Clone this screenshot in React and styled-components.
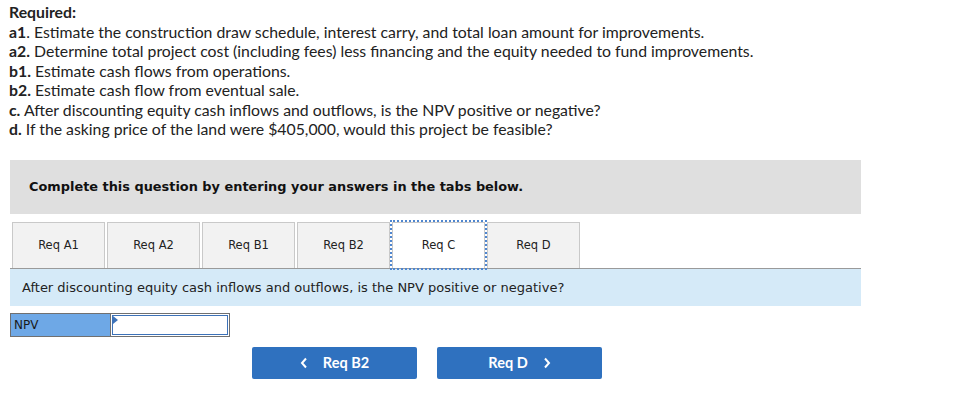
import React from 'react';
import styled, { createGlobalStyle } from 'styled-components';

const GlobalStyle = createGlobalStyle`
  body {
    margin: 0;
    background: #fff;
  }
`;

const Page = styled.div`
  padding: 2px 0 0 9px;
  width: 957px;
  box-sizing: border-box;
`;

const Required = styled.div`
  font-family: Lato, "Open Sans", sans-serif;
  font-size: 15.8px;
  line-height: 19.5px;
  color: #222;
`;

const Line = styled.div`
  b {
    font-weight: 700;
  }
`;

const Panel = styled.div`
  width: 851px;
  margin: 21px 0 0 1px;
  font-family: Verdana, "DejaVu Sans", sans-serif;
`;

const Banner = styled.div`
  background: #dfdfdf;
  height: 54px;
  display: flex;
  align-items: center;
  padding-left: 19px;
  font-size: 12.9px;
  font-weight: bold;
  color: #111;
`;

const TabRow = styled.div`
  display: flex;
  gap: 2px;
  padding: 8px 2px 0;
  border-bottom: 1px solid #9a9a9a;
`;

const Tab = styled.div`
  width: 93px;
  height: 46px;
  box-sizing: border-box;
  border: 1px solid #c9c9c9;
  border-bottom: none;
  background: ${({ active }) => (active ? '#fff' : '#f2f2f2')};
  outline: ${({ active }) => (active ? '2px dotted #4f86cf' : 'none')};
  outline-offset: 0;
  display: flex;
  align-items: center;
  justify-content: center;
  font-size: 11.5px;
  color: #222;
`;

const Question = styled.div`
  background: #d5eaf8;
  height: 37px;
  display: flex;
  align-items: center;
  padding-left: 12px;
  font-size: 13px;
  color: #222;
`;

const AnswerRow = styled.div`
  display: flex;
  margin-top: 7px;
`;

const Label = styled.div`
  width: 100px;
  height: 24px;
  box-sizing: border-box;
  background: #6ea8e6;
  border: 1px solid #707070;
  border-right: none;
  display: flex;
  align-items: center;
  padding-left: 3px;
  font-size: 12px;
  color: #1a1a1a;
`;

const InputCell = styled.div`
  position: relative;
  width: 120px;
  height: 24px;
  box-sizing: border-box;
  border: 1px solid #707070;
  padding: 1px;
  background: #fff;
`;

const Field = styled.input`
  width: 100%;
  height: 100%;
  box-sizing: border-box;
  border: 1px solid #3d72b8;
  outline: none;
  padding: 0 4px;
`;

const Marker = styled.span`
  position: absolute;
  left: 2px;
  top: 2px;
  width: 0;
  height: 0;
  border-top: 4px solid transparent;
  border-bottom: 4px solid transparent;
  border-left: 5px solid #3d72b8;
`;

const NavRow = styled.div`
  display: flex;
  gap: 20px;
  margin: 10px 0 0 242px;
`;

const NavButton = styled.button`
  width: 165px;
  height: 32px;
  border: none;
  border-radius: 2px;
  background: #2f71bf;
  color: #fff;
  font-family: Lato, "Open Sans", sans-serif;
  font-weight: 700;
  font-size: 14.5px;
  display: flex;
  align-items: center;
  justify-content: center;
  gap: 15px;
  cursor: pointer;
`;

const Chevron = ({ dir }) => (
  <svg width="8" height="12" viewBox="0 0 8 12">
    <path
      d={dir === 'left' ? 'M6 1.5L2 6l4 4.5' : 'M2 1.5L6 6l-4 4.5'}
      fill="none"
      stroke="#fff"
      strokeWidth="2"
    />
  </svg>
);

const tabs = ['Req A1', 'Req A2', 'Req B1', 'Req B2', 'Req C', 'Req D'];

export default function App() {
  return (
    <>
      <GlobalStyle />
      <Page>
        <Required>
          <Line><b>Required:</b></Line>
          <Line><b>a1</b>. Estimate the construction draw schedule, interest carry, and total loan amount for improvements.</Line>
          <Line><b>a2.</b> Determine total project cost (including fees) less financing and the equity needed to fund improvements.</Line>
          <Line><b>b1.</b> Estimate cash flows from operations.</Line>
          <Line><b>b2.</b> Estimate cash flow from eventual sale.</Line>
          <Line><b>c.</b> After discounting equity cash inflows and outflows, is the NPV positive or negative?</Line>
          <Line><b>d.</b> If the asking price of the land were $405,000, would this project be feasible?</Line>
        </Required>
        <Panel>
          <Banner>Complete this question by entering your answers in the tabs below.</Banner>
          <TabRow>
            {tabs.map((t) => (
              <Tab key={t} active={t === 'Req C'}>{t}</Tab>
            ))}
          </TabRow>
          <Question>After discounting equity cash inflows and outflows, is the NPV positive or negative?</Question>
          <AnswerRow>
            <Label>NPV</Label>
            <InputCell>
              <Field type="text" />
              <Marker />
            </InputCell>
          </AnswerRow>
          <NavRow>
            <NavButton><Chevron dir="left" />Req B2</NavButton>
            <NavButton>Req D<Chevron dir="right" /></NavButton>
          </NavRow>
        </Panel>
      </Page>
    </>
  );
}
